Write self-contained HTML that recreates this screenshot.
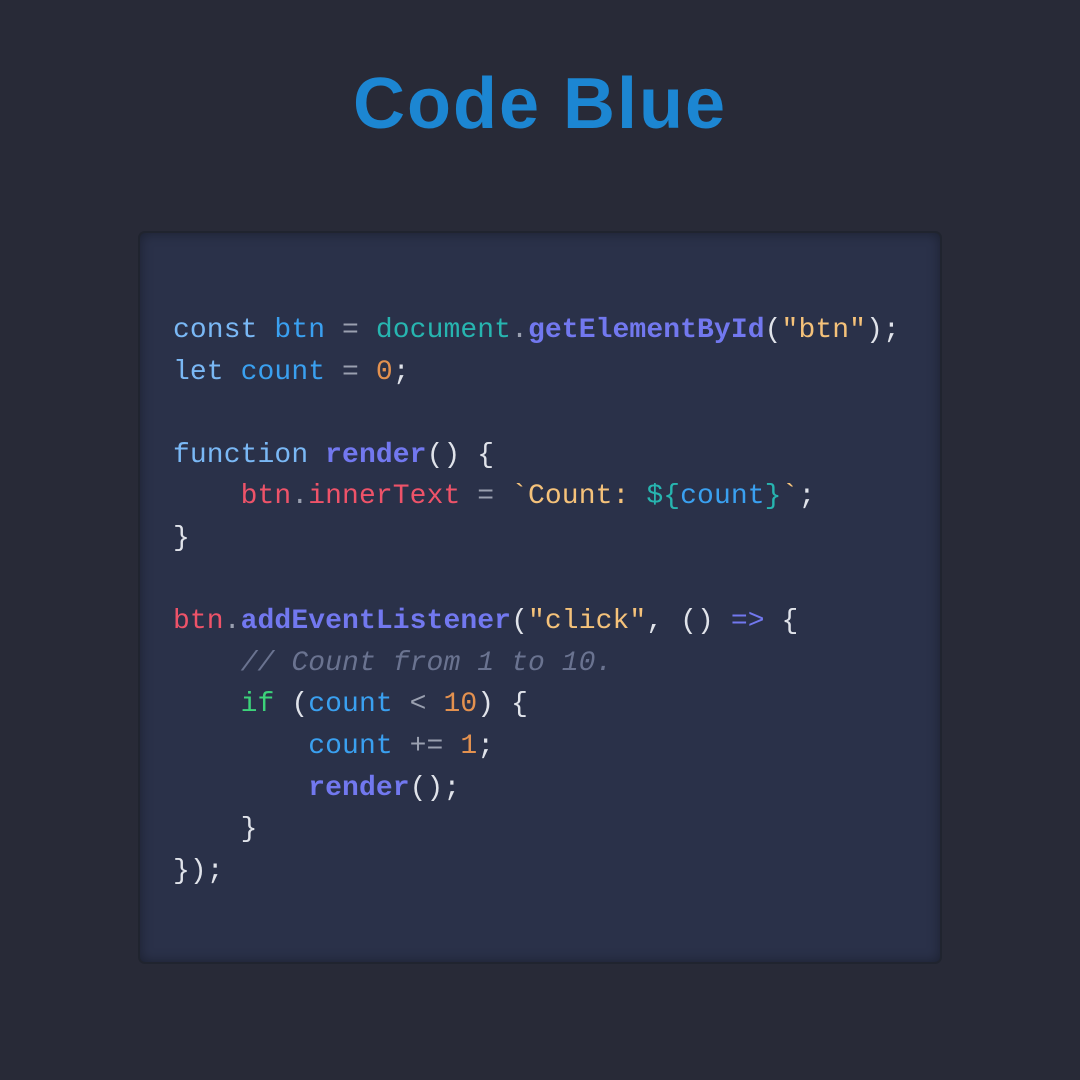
<!DOCTYPE html>
<html><head><style>
html,body{margin:0;padding:0}
body{width:1080px;height:1080px;background:#282a37;position:relative;overflow:hidden;font-family:"Liberation Sans",sans-serif}
h1{position:absolute;top:59px;left:0;width:1080px;text-align:center;margin:0;font-size:72px;font-weight:bold;color:#1c86d2;line-height:90px;letter-spacing:2px}
.card{position:absolute;left:140px;top:233px;width:800px;height:729px;background:#2a3149;border-radius:5px;box-shadow:0 0 0 2px #20242f, inset 0 0 12px rgba(0,0,0,0.35)}
pre{position:absolute;left:173px;top:310px;margin:0;font-family:"Liberation Mono",monospace;font-size:28px;line-height:41.6px;color:#e0e3ea;letter-spacing:0.1px}
.k{color:#7ab8f5}.v{color:#3aa0f0}.t{color:#27b5b0}.f{color:#7278ef;font-weight:bold}.s{color:#f5c27a}.n{color:#e3914f}.r{color:#ee5369}.c{color:#6a7390;font-style:italic}.g{color:#3cd37a}.p{color:#9aa0b0}
</style></head><body>
<h1>Code Blue</h1>
<div class="card"></div>
<pre><span class="k">const</span> <span class="v">btn</span> <span class="p">=</span> <span class="t">document</span><span class="p">.</span><span class="f">getElementById</span>(<span class="s">"btn"</span>);
<span class="k">let</span> <span class="v">count</span> <span class="p">=</span> <span class="n">0</span>;

<span class="k">function</span> <span class="f">render</span>() {
    <span class="r">btn</span><span class="p">.</span><span class="r">innerText</span> <span class="p">=</span> <span class="s">`Count: </span><span class="t">${</span><span class="v">count</span><span class="t">}</span><span class="s">`</span>;
}

<span class="r">btn</span><span class="p">.</span><span class="f">addEventListener</span>(<span class="s">"click"</span>, () <span class="f" style="font-weight:normal">=&gt;</span> {
    <span class="c">// Count from 1 to 10.</span>
    <span class="g">if</span> (<span class="v">count</span> <span class="p">&lt;</span> <span class="n">10</span>) {
        <span class="v">count</span> <span class="p">+=</span> <span class="n">1</span>;
        <span class="f">render</span>();
    }
});</pre>
</body></html>
